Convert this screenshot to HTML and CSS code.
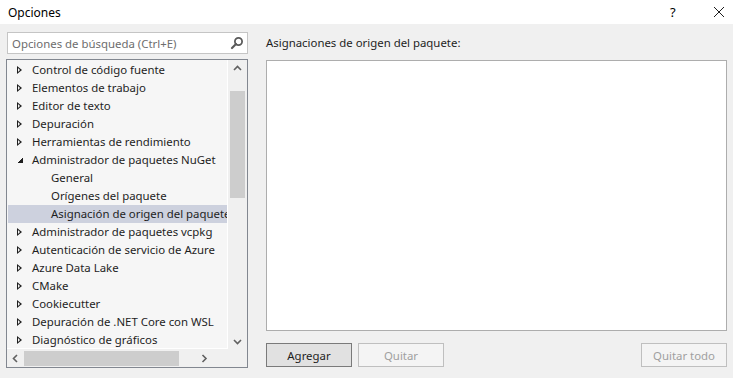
FILE: index.html
```html
<!DOCTYPE html>
<html lang="es">
<head>
    <meta charset="UTF-8">
    <title>Opciones</title>
    <link rel="stylesheet" href="styles.css">
</head>
<body>
    <div class="titlebar">
        <span class="title">Opciones</span>
        <span class="help">?</span>
        <svg class="close" width="12" height="12" viewBox="0 0 12 12"><path d="M1 1L11 11M11 1L1 11" stroke="#1e1e1e" stroke-width="1"/></svg>
    </div>
    <div class="main">
        <div class="left">
            <div class="search">
                <span class="placeholder">Opciones de búsqueda (Ctrl+E)</span>
                <svg class="lupa" width="14" height="14" viewBox="0 0 14 14"><circle cx="8.5" cy="5.5" r="3.6" fill="none" stroke="#5a5a5a" stroke-width="1.8"/><path d="M6 8L2 12" stroke="#5a5a5a" stroke-width="2.2" stroke-linecap="round"/></svg>
            </div>
            <div class="tree">
                <div class="tree-top">
                    <div class="rows">
                        <div class="row"><i class="arrow"></i>Control de código fuente</div>
                        <div class="row"><i class="arrow"></i>Elementos de trabajo</div>
                        <div class="row"><i class="arrow"></i>Editor de texto</div>
                        <div class="row"><i class="arrow"></i>Depuración</div>
                        <div class="row"><i class="arrow"></i>Herramientas de rendimiento</div>
                        <div class="row"><i class="arrow open"></i>Administrador de paquetes NuGet</div>
                        <div class="row child">General</div>
                        <div class="row child">Orígenes del paquete</div>
                        <div class="row child selected">Asignación de origen del paquete</div>
                        <div class="row"><i class="arrow"></i>Administrador de paquetes vcpkg</div>
                        <div class="row"><i class="arrow"></i>Autenticación de servicio de Azure</div>
                        <div class="row"><i class="arrow"></i>Azure Data Lake</div>
                        <div class="row"><i class="arrow"></i>CMake</div>
                        <div class="row"><i class="arrow"></i>Cookiecutter</div>
                        <div class="row"><i class="arrow"></i>Depuración de .NET Core con WSL</div>
                        <div class="row"><i class="arrow"></i>Diagnóstico de gráficos</div>
                    </div>
                    <div class="vscroll">
                        <svg class="chev" width="17" height="17" viewBox="0 0 17 17"><path d="M5 10L8.5 6.5L12 10" fill="none" stroke="#606060" stroke-width="1.6"/></svg>
                        <div class="vthumb"></div>
                        <svg class="chev down" width="17" height="17" viewBox="0 0 17 17"><path d="M5 7L8.5 10.5L12 7" fill="none" stroke="#606060" stroke-width="1.6"/></svg>
                    </div>
                </div>
                <div class="tree-bottom">
                    <div class="hscroll">
                        <svg class="chev" width="17" height="17" viewBox="0 0 17 17"><path d="M10 5L6.5 8.5L10 12" fill="none" stroke="#606060" stroke-width="1.6"/></svg>
                        <div class="hthumb"></div>
                        <svg class="chev right" width="17" height="17" viewBox="0 0 17 17"><path d="M7 5L10.5 8.5L7 12" fill="none" stroke="#606060" stroke-width="1.6"/></svg>
                    </div>
                    <div class="corner"></div>
                </div>
            </div>
        </div>
        <div class="right">
            <div class="label">Asignaciones de origen del paquete:</div>
            <div class="listbox"></div>
            <div class="buttons">
                <button class="btn default">Agregar</button>
                <button class="btn" disabled>Quitar</button>
                <button class="btn last" disabled>Quitar todo</button>
            </div>
        </div>
    </div>
</body>
</html>
```

FILE: styles.css
```css
body {
    margin: 0;
    width: 733px;
    height: 378px;
    overflow: hidden;
    background-color: #f0f0f0;
    font-family: "Noto Sans", sans-serif;
    font-size: 11.4px;
    color: #1e1e1e;
}
.titlebar {
    height: 24px;
    background-color: #fff;
    display: flex;
    align-items: center;
    padding-left: 8px;
    font-size: 12px;
}
.title {
    flex: 1;
    color: #000;
}
.help {
    width: 20px;
    margin-right: 23px;
    color: #000;
    font-size: 13px;
}
.close {
    margin-right: 8px;
}
.main {
    display: flex;
    padding: 8px 6px 0 6px;
}
.left {
    width: 242px;
}
.search {
    margin-left: 1px;
    height: 20px;
    border: 1px solid #c5c5c5;
    background-color: #fff;
    display: flex;
    align-items: center;
    padding: 0 3px 0 4px;
}
.placeholder {
    flex: 1;
    color: #6d6d6d;
}
.tree {
    margin-top: 5px;
    width: 240px;
    border: 1px solid #828790;
    background-color: #f0f0f0;
}
.tree-top {
    display: flex;
    height: 290px;
}
.rows {
    width: 221px;
    height: 289px;
    background-color: #f6f6f6;
    padding: 1px 0 0 1px;
    overflow: hidden;
    border-right: 1px solid #fff;
    border-bottom: 1px solid #fff;
    box-sizing: border-box;
    flex: none;
}
.row {
    height: 18px;
    line-height: 18px;
    white-space: nowrap;
    padding-left: 8px;
    display: flex;
    align-items: center;
}
.row.child {
    padding-left: 43px;
}
.row.selected {
    background-color: #cdd1de;
}
.arrow {
    width: 0;
    height: 0;
    border-top: 4px solid transparent;
    border-bottom: 4px solid transparent;
    border-left: 5px solid #1e1e1e;
    position: relative;
    margin-right: 10px;
    margin-left: 1px;
}
.arrow::after {
    content: "";
    position: absolute;
    left: -4px;
    top: -2px;
    border-top: 2px solid transparent;
    border-bottom: 2px solid transparent;
    border-left: 2px solid #f6f6f6;
}
.arrow.open {
    border: none;
    width: 6px;
    height: 6px;
    background: linear-gradient(to bottom right, transparent 50%, #1e1e1e 50%);
    margin-right: 9px;
    margin-left: 1px;
}
.arrow.open::after {
    display: none;
}
.vscroll {
    width: 17px;
    margin-left: 1px;
    display: flex;
    flex-direction: column;
}
.vthumb {
    margin: 14px 1px 0 1px;
    height: 107px;
    background-color: #cdcdcd;
}
.chev {
    display: block;
    flex: none;
}
.chev.down {
    margin-top: auto;
}
.tree-bottom {
    display: flex;
    height: 17px;
}
.hscroll {
    width: 222px;
    display: flex;
    align-items: center;
}
.hthumb {
    width: 155px;
    height: 15px;
    flex: none;
    background-color: #cdcdcd;
}
.chev.right {
    margin-left: auto;
}
.corner {
    flex: 1;
}
.right {
    margin-left: 18px;
    flex: 1;
    display: flex;
    flex-direction: column;
}
.label {
    height: 20px;
    line-height: 20px;
    margin-top: 1px;
}
.listbox {
    margin-top: 7px;
    height: 269px;
    border: 1px solid #adadad;
    background-color: #fff;
}
.buttons {
    display: flex;
    margin-top: 12px;
}
.btn {
    width: 86px;
    height: 24px;
    margin-right: 6px;
    font-family: "Noto Sans", sans-serif;
    font-size: 11.4px;
    border: 1px solid #adadad;
    background-color: #e1e1e1;
    color: #1e1e1e;
    padding: 0;
}
.btn.default {
    border-color: #7a7a7a;
}
.btn:disabled {
    background-color: #f4f4f4;
    border-color: #bfbfbf;
    color: #a0a0a0;
}
.btn.last {
    margin-left: auto;
    margin-right: 0;
}
```
